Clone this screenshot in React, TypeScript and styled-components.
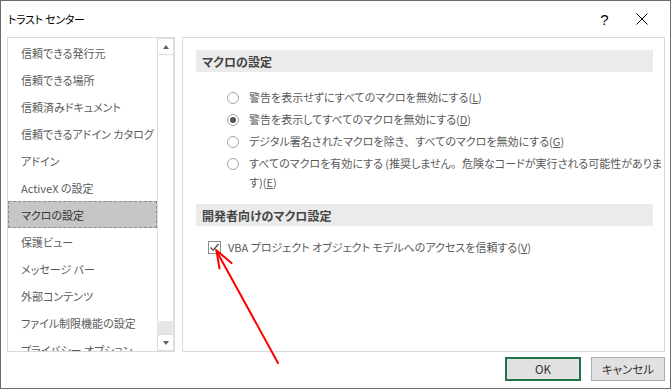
import styled, { createGlobalStyle } from 'styled-components';

const GlobalStyle = createGlobalStyle`
  html, body {
    margin: 0;
    padding: 0;
    background: #ffffff;
  }
  body {
    font-family: "Noto Sans CJK JP", "Noto Sans", sans-serif;
    font-feature-settings: "palt";
  }
`;

const navItems = [
  '信頼できる発行元',
  '信頼できる場所',
  '信頼済みドキュメント',
  '信頼できるアドイン カタログ',
  'アドイン',
  'ActiveX の設定',
  'マクロの設定',
  '保護ビュー',
  'メッセージ バー',
  '外部コンテンツ',
  'ファイル制限機能の設定',
  'プライバシー オプション',
];

const Punct = styled.span`
  font-feature-settings: normal;
`;

const radios = [
  { label: <>警告を表示せずにすべてのマクロを無効にする(</>, key: 'L', checked: false },
  { label: <>警告を表示してすべてのマクロを無効にする(</>, key: 'D', checked: true },
  {
    label: (
      <>
        デジタル署名されたマクロを除き<Punct>、</Punct>すべてのマクロを無効にする(
      </>
    ),
    key: 'G',
    checked: false,
  },
  {
    label: (
      <>
        すべてのマクロを有効にする (推奨しません<Punct>。</Punct>危険なコードが実行される可能性がありま
        <br />
        す)(
      </>
    ),
    key: 'E',
    checked: false,
  },
];

const App = () => {
  return (
    <>
      <GlobalStyle />
      <Window>
        <TitleBar>
          <Title>トラスト センター</Title>
          <ControlButton>?</ControlButton>
          <ControlButton>
            <svg width="12" height="12" viewBox="0 0 12 12">
              <path d="M0.5 0.5 L11.5 11.5 M11.5 0.5 L0.5 11.5" stroke="#000" strokeWidth="1" />
            </svg>
          </ControlButton>
        </TitleBar>

        <Body>
          <Sidebar>
            <NavList>
              {navItems.map((item) => (
                <NavItem key={item} selected={item === 'マクロの設定'}>
                  {item}
                </NavItem>
              ))}
            </NavList>
            <ScrollBar>
              <ScrollButton>
                <Triangle up />
              </ScrollButton>
              <ScrollThumb />
              <ScrollTrack />
              <ScrollButton>
                <Triangle />
              </ScrollButton>
            </ScrollBar>
          </Sidebar>

          <Panel>
            <SectionHeader>マクロの設定</SectionHeader>
            <RadioGroup>
              {radios.map((r) => (
                <RadioRow key={r.key}>
                  <RadioCircle checked={r.checked} />
                  <RadioText>
                    {r.label}
                    <u>{r.key}</u>)
                  </RadioText>
                </RadioRow>
              ))}
            </RadioGroup>

            <SectionHeader>開発者向けのマクロ設定</SectionHeader>
            <CheckRow>
              <CheckBox>
                <svg width="11" height="11" viewBox="0 0 11 11">
                  <path d="M1.5 5.5 L4.2 8.3 L9.5 2" stroke="#555" strokeWidth="1.4" fill="none" />
                </svg>
              </CheckBox>
              <span>
                VBA プロジェクト オブジェクト モデルへのアクセスを信頼する(<u>V</u>)
              </span>
            </CheckRow>
          </Panel>
        </Body>

        <Footer>
          <DialogButton primary width={76}>OK</DialogButton>
          <DialogButton width={74}>キャンセル</DialogButton>
        </Footer>

        <Annotation width="671" height="389" viewBox="0 0 671 389">
          <g stroke="#ff0000" strokeWidth="2" fill="none" strokeLinecap="round">
            <path d="M278 363 L216.5 251" />
            <path d="M231.5 263 L216.5 250.5 L219.5 268.5" />
          </g>
        </Annotation>
      </Window>
    </>
  );
};

const Window = styled.div`
  position: relative;
  box-sizing: border-box;
  width: 671px;
  height: 389px;
  border: 1px solid #6b6b6b;
  background: #ffffff;
  display: flex;
  flex-direction: column;
`;

const TitleBar = styled.div`
  display: flex;
  align-items: center;
  height: 36px;
  padding: 0 10px 0 7px;
  color: #000000;
`;

const Title = styled.div`
  flex: 1;
  font-size: 11px;
  letter-spacing: -0.3px;
`;

const ControlButton = styled.div`
  width: 37px;
  display: flex;
  align-items: center;
  justify-content: center;
  font-family: "Liberation Sans", sans-serif;
  font-size: 15px;
`;

const Body = styled.div`
  display: flex;
  gap: 7px;
  height: 315px;
  padding: 0 5px 0 6px;
`;

const Sidebar = styled.div`
  flex: none;
  box-sizing: border-box;
  width: 168px;
  border: 1px solid #dadada;
  display: flex;
  overflow: hidden;
`;

const NavList = styled.div`
  flex: 1;
  min-width: 0;
  padding-top: 1px;
  overflow: hidden;
`;

const NavItem = styled.div<{ selected?: boolean }>`
  box-sizing: border-box;
  height: 27px;
  display: flex;
  align-items: center;
  padding-left: 12px;
  font-size: 11px;
  white-space: nowrap;
  background: ${(p) => (p.selected ? '#c6c6c6' : 'transparent')};
  border: 1px ${(p) => (p.selected ? 'dashed #8c8c8c' : 'solid transparent')};
  color: ${(p) => (p.selected ? '#333333' : '#5a5a5a')};
`;

const ScrollBar = styled.div`
  flex: none;
  width: 17px;
  display: flex;
  flex-direction: column;
`;

const ScrollButton = styled.div`
  box-sizing: border-box;
  height: 17px;
  border: 1px solid #dcdcdc;
  display: flex;
  align-items: center;
  justify-content: center;
`;

const Triangle = styled.div<{ up?: boolean }>`
  width: 0;
  height: 0;
  border-left: 3.5px solid transparent;
  border-right: 3.5px solid transparent;
  ${(p) => (p.up ? 'border-bottom: 4px solid #606060;' : 'border-top: 4px solid #606060;')}
`;

const ScrollThumb = styled.div`
  flex: 1;
  border-left: 1px solid #dcdcdc;
  border-right: 1px solid #dcdcdc;
`;

const ScrollTrack = styled.div`
  height: 13px;
  background: #e6e6e6;
`;

const Panel = styled.div`
  flex: 1;
  min-width: 0;
  box-sizing: border-box;
  border: 1px solid #dadada;
  padding: 12px 11px 0 13px;
`;

const SectionHeader = styled.div`
  height: 22px;
  display: flex;
  align-items: center;
  padding-left: 6px;
  background: #ebebeb;
  font-size: 12px;
  font-weight: bold;
  color: #444444;
`;

const RadioGroup = styled.div`
  display: flex;
  flex-direction: column;
  gap: 3px;
  padding: 16px 0 12px 31px;
`;

const RadioRow = styled.div`
  display: flex;
  align-items: flex-start;
  gap: 10px;
  font-size: 11px;
  line-height: 19px;
  color: #5a5a5a;
`;

const RadioText = styled.span`
  white-space: nowrap;
`;

const RadioCircle = styled.div<{ checked?: boolean }>`
  flex: none;
  box-sizing: border-box;
  width: 12px;
  height: 12px;
  margin-top: 3.5px;
  border: 1px solid #a6a6a6;
  border-radius: 50%;
  display: flex;
  align-items: center;
  justify-content: center;

  &::after {
    content: '';
    display: ${(p) => (p.checked ? 'block' : 'none')};
    width: 6px;
    height: 6px;
    border-radius: 50%;
    background: #555555;
  }
`;

const CheckRow = styled.div`
  display: flex;
  align-items: center;
  gap: 7px;
  padding: 13px 0 0 12px;
  font-size: 11px;
  color: #5a5a5a;
`;

const CheckBox = styled.div`
  box-sizing: border-box;
  width: 13px;
  height: 13px;
  border: 1px solid #8a8a8a;
  display: flex;
  align-items: center;
  justify-content: center;
`;

const Footer = styled.div`
  flex: 1;
  display: flex;
  justify-content: flex-end;
  align-items: flex-start;
  gap: 10px;
  padding: 5px 5px 0 0;
`;

const DialogButton = styled.div<{ primary?: boolean; width: number }>`
  box-sizing: border-box;
  width: ${(p) => p.width}px;
  height: 24px;
  display: flex;
  align-items: center;
  justify-content: center;
  background: #e1e1e1;
  border: ${(p) => (p.primary ? '2px solid #217346' : '1px solid #adadad')};
  font-size: 11.5px;
  color: #333333;
`;

const Annotation = styled.svg`
  position: absolute;
  left: -1px;
  top: -1px;
  pointer-events: none;
`;

export default App;
